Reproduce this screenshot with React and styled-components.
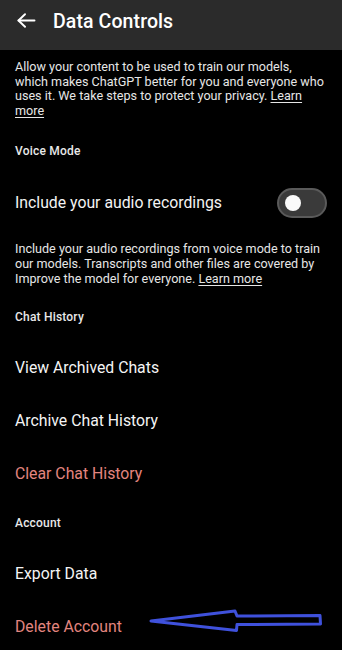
import styled, { createGlobalStyle } from "styled-components";

const GlobalStyle = createGlobalStyle`
  html, body {
    margin: 0;
    padding: 0;
    background: #000;
  }
  body {
    font-family: Roboto, "Noto Sans", sans-serif;
    -webkit-font-smoothing: antialiased;
  }
`;

const sections = [
  { label: "Chat History", items: [
    { text: "View Archived Chats" },
    { text: "Archive Chat History" },
    { text: "Clear Chat History", danger: true },
  ] },
  { label: "Account", items: [
    { text: "Export Data" },
    { text: "Delete Account", danger: true, marked: true },
  ] },
];

const App = () => {
  return (
    <Page>
      <GlobalStyle />
      <Header>
        <BackButton>
          <svg width="19" height="15" viewBox="0 0 19 15" fill="none" stroke="#fff" strokeWidth="1.9" strokeLinecap="round" strokeLinejoin="round">
            <path d="M1.5 7.5H17.5" />
            <path d="M8 1.2L1.5 7.5L8 13.8" />
          </svg>
        </BackButton>
        <Title>Data Controls</Title>
      </Header>

      <Content>
        <Description top={10} lh={14.7}>
          Allow your content to be used to train our models,<br />
          which makes ChatGPT better for you and everyone who<br />
          uses it. We take steps to protect your privacy. <Link>Learn</Link><br />
          <Link>more</Link>
        </Description>

        <SectionLabel top={22}>Voice Mode</SectionLabel>
        <ToggleRow>
          <ItemText>Include your audio recordings</ItemText>
          <Toggle>
            <Knob />
          </Toggle>
        </ToggleRow>
        <Description top={15} lh={15}>
          Include your audio recordings from voice mode to train<br />
          our models. Transcripts and other files are covered by<br />
          Improve the model for everyone. <Link>Learn more</Link>
        </Description>

        {sections.map((section, index) => (
          <div key={section.label}>
            <SectionLabel top={index === 0 ? 21 : 1}>{section.label}</SectionLabel>
            <ItemList>
              {section.items.map((item) => (
                <Item key={item.text}>
                  <ItemText danger={item.danger}>{item.text}</ItemText>
                  {item.marked && (
                    <Marker width="176" height="26" viewBox="0 0 176 26" fill="none">
                      <path
                        d="M2 12 L86 2 L88 7 L171 6.5 L171.5 15 L88 15.5 L87.5 21.5 Z"
                        stroke="#3f51dc"
                        strokeWidth="3"
                        strokeLinejoin="round"
                      />
                    </Marker>
                  )}
                </Item>
              ))}
            </ItemList>
          </div>
        ))}
      </Content>
    </Page>
  );
};

const Page = styled.div`
  width: 342px;
  height: 650px;
  overflow: hidden;
  background: #000;
  color: #fff;
`;

const Header = styled.div`
  height: 50px;
  background: #2b2b2b;
  display: flex;
  align-items: center;
  padding: 0 0 0 17px;
  box-sizing: border-box;
`;

const BackButton = styled.div`
  width: 19px;
  height: 15px;
  display: flex;
  margin-top: -10px;
`;

const Title = styled.h1`
  margin: -8px 0 0 17px;
  font-size: 19.5px;
  font-weight: 500;
  color: #fff;
  letter-spacing: 0.1px;
`;

const Content = styled.div`
  padding: 0 15px;
`;

const Description = styled.p`
  margin: ${(p) => p.top}px -10px 0 0;
  font-size: 12.6px;
  line-height: ${(p) => p.lh}px;
  color: #e6e6e6;
  white-space: nowrap;
`;

const Link = styled.span`
  text-decoration: underline;
  text-underline-offset: 2px;
`;

const SectionLabel = styled.div`
  margin-top: ${(p) => p.top}px;
  height: 20px;
  line-height: 20px;
  font-size: 12px;
  font-weight: 500;
  color: #e8e8e8;
  letter-spacing: 0.2px;
`;

const ToggleRow = styled.div`
  margin-top: 19px;
  height: 46px;
  display: flex;
  align-items: center;
  justify-content: space-between;
`;

const Toggle = styled.div`
  box-sizing: border-box;
  width: 50px;
  height: 30px;
  border-radius: 15px;
  background: #3a3a3a;
  border: 2px solid #5a5a5a;
  display: flex;
  align-items: center;
  padding-left: 6px;
`;

const Knob = styled.div`
  width: 16px;
  height: 16px;
  border-radius: 50%;
  background: #fafafa;
`;

const ItemList = styled.div`
  padding: 14px 0 12px;
`;

const Item = styled.div`
  position: relative;
  height: 53px;
  display: flex;
  align-items: center;
`;

const ItemText = styled.span`
  font-size: 15.8px;
  color: ${(p) => (p.danger ? "#e3857f" : "#f4f4f4")};
`;

const Marker = styled.svg`
  position: absolute;
  left: 134px;
  top: 9px;
`;

export default App;
